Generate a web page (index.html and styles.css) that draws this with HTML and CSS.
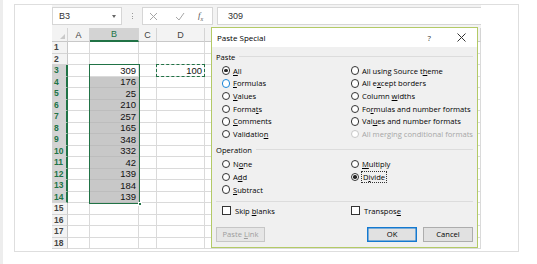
FILE: index.html
```html
<!DOCTYPE html>
<html>
<head>
<meta charset="utf-8">
<link rel="stylesheet" href="styles.css">
</head>
<body>
<div class="strip"></div>
<div class="card">
  <div class="pane">
    <div class="fbar">
      <div class="namebox"><span>B3</span><span class="dd"></span></div>
      <div class="vdots"><i></i><i></i><i></i></div>
      <div class="fxbox">
        <svg class="ico-x" width="9" height="9" viewBox="0 0 9 9"><path d="M1 1L8 8M8 1L1 8" stroke="#a6a6a6" stroke-width="1" fill="none"/></svg>
        <svg class="ico-ok" width="10" height="9" viewBox="0 0 10 9"><path d="M1 5L4 8L9 1" stroke="#a6a6a6" stroke-width="1" fill="none"/></svg>
        <span class="fx">f<sub>x</sub></span>
      </div>
      <div class="input">309</div>
    </div>
    <div class="grid">
      <div class="ch corner"><span class="tri"></span></div><div class="ch">A</div><div class="ch csel">B</div><div class="ch">C</div><div class="ch">D</div><div class="ch"></div>
      <div class="rh">1</div><div class="c"></div><div class="c"></div><div class="c"></div><div class="c"></div><div class="c"></div>
      <div class="rh">2</div><div class="c"></div><div class="c"></div><div class="c"></div><div class="c"></div><div class="c"></div>
      <div class="rh rsel">3</div><div class="c"></div><div class="c n">309</div><div class="c"></div><div class="c n">100</div><div class="c"></div>
      <div class="rh rsel">4</div><div class="c"></div><div class="c n s">176</div><div class="c"></div><div class="c"></div><div class="c"></div>
      <div class="rh rsel">5</div><div class="c"></div><div class="c n s">25</div><div class="c"></div><div class="c"></div><div class="c"></div>
      <div class="rh rsel">6</div><div class="c"></div><div class="c n s">210</div><div class="c"></div><div class="c"></div><div class="c"></div>
      <div class="rh rsel">7</div><div class="c"></div><div class="c n s">257</div><div class="c"></div><div class="c"></div><div class="c"></div>
      <div class="rh rsel">8</div><div class="c"></div><div class="c n s">165</div><div class="c"></div><div class="c"></div><div class="c"></div>
      <div class="rh rsel">9</div><div class="c"></div><div class="c n s">348</div><div class="c"></div><div class="c"></div><div class="c"></div>
      <div class="rh rsel">10</div><div class="c"></div><div class="c n s">332</div><div class="c"></div><div class="c"></div><div class="c"></div>
      <div class="rh rsel">11</div><div class="c"></div><div class="c n s">42</div><div class="c"></div><div class="c"></div><div class="c"></div>
      <div class="rh rsel">12</div><div class="c"></div><div class="c n s">139</div><div class="c"></div><div class="c"></div><div class="c"></div>
      <div class="rh rsel">13</div><div class="c"></div><div class="c n s">184</div><div class="c"></div><div class="c"></div><div class="c"></div>
      <div class="rh rsel">14</div><div class="c"></div><div class="c n s">139</div><div class="c"></div><div class="c"></div><div class="c"></div>
      <div class="rh">15</div><div class="c"></div><div class="c"></div><div class="c"></div><div class="c"></div><div class="c"></div>
      <div class="rh">16</div><div class="c"></div><div class="c"></div><div class="c"></div><div class="c"></div><div class="c"></div>
      <div class="rh">17</div><div class="c"></div><div class="c"></div><div class="c"></div><div class="c"></div><div class="c"></div>
      <div class="rh">18</div><div class="c"></div><div class="c"></div><div class="c"></div><div class="c"></div><div class="c"></div>
      <div class="selbox"><span class="handle"></span></div>
      <div class="marquee"></div>
    </div>

    <div class="dialog">
      <div class="titlebar">
        <span class="title">Paste Special</span>
        <span class="help">?</span>
        <svg class="close" width="9" height="9" viewBox="0 0 9 9"><path d="M0.5 0.5L8.5 8.5M8.5 0.5L0.5 8.5" stroke="#333" stroke-width="1" fill="none"/></svg>
      </div>
      <div class="body">
        <div class="glabel"><span>Paste</span><i class="gline"></i></div>
        <div class="opts">
          <div class="opt"><span class="radio on"></span><span><u>A</u>ll</span></div>
          <div class="opt"><span class="radio"></span><span>All using Source t<u>h</u>eme</span></div>
          <div class="opt"><span class="radio hover"></span><span><u>F</u>ormulas</span></div>
          <div class="opt"><span class="radio"></span><span>All e<u>x</u>cept borders</span></div>
          <div class="opt"><span class="radio"></span><span><u>V</u>alues</span></div>
          <div class="opt"><span class="radio"></span><span>Column <u>w</u>idths</span></div>
          <div class="opt"><span class="radio"></span><span>Forma<u>t</u>s</span></div>
          <div class="opt"><span class="radio"></span><span>Fo<u>r</u>mulas and number formats</span></div>
          <div class="opt"><span class="radio"></span><span><u>C</u>omments</span></div>
          <div class="opt"><span class="radio"></span><span>Val<u>u</u>es and number formats</span></div>
          <div class="opt"><span class="radio"></span><span>Validatio<u>n</u></span></div>
          <div class="opt dis"><span class="radio"></span><span>All merging conditional formats</span></div>
        </div>
        <div class="glabel op"><span>Operation</span><i class="gline"></i></div>
        <div class="opts ops">
          <div class="opt"><span class="radio"></span><span>N<u>o</u>ne</span></div>
          <div class="opt"><span class="radio"></span><span><u>M</u>ultiply</span></div>
          <div class="opt"><span class="radio"></span><span>A<u>d</u>d</span></div>
          <div class="opt"><span class="radio on"></span><span class="focus">D<u>i</u>vide</span></div>
          <div class="opt"><span class="radio"></span><span><u>S</u>ubtract</span></div>
          <div class="opt"></div>
        </div>
        <div class="sep"></div>
        <div class="checks">
          <div class="opt"><span class="box"></span><span>Skip <u>b</u>lanks</span></div>
          <div class="opt"><span class="box"></span><span>Transpos<u>e</u></span></div>
        </div>
        <div class="buttons">
          <div class="btn disabled"><span>Paste <u>L</u>ink</span></div>
          <div class="spacer"></div>
          <div class="btn default"><span>OK</span></div>
          <div class="btn"><span>Cancel</span></div>
        </div>
      </div>
    </div>
  </div>
</div>
</body>
</html>
```
FILE: styles.css
```css
* { box-sizing: border-box; }
html, body { margin: 0; padding: 0; }
body {
  width: 537px;
  height: 264px;
  background: #ffffff;
  display: flex;
  align-items: flex-start;
  overflow: hidden;
  font-family: "Liberation Sans", Arial, sans-serif;
}
.strip {
  width: 3px;
  height: 264px;
  background: #ededed;
  flex: none;
}
.card {
  margin-left: 11px;
  margin-top: 4px;
  width: 505px;
  height: 248px;
  border: 1px solid #dedede;
  flex: none;
}
.pane {
  position: relative;
  margin-left: 37px;
  width: 429px;
  height: 244px;
}

/* formula bar */
.fbar {
  height: 23px;
  background: #f3f3f3;
  display: flex;
  align-items: flex-start;
  padding-top: 2px;
}
.namebox {
  width: 70px;
  height: 18px;
  background: #fff;
  border: 1px solid #d6d6d6;
  display: flex;
  align-items: center;
  padding-left: 6px;
  font-size: 9px;
  color: #333;
}
.namebox .dd {
  margin-left: auto;
  margin-right: 5px;
  width: 0;
  height: 0;
  border-left: 2.5px solid transparent;
  border-right: 2.5px solid transparent;
  border-top: 3px solid #666;
}
.vdots {
  width: 20px;
  height: 18px;
  display: flex;
  flex-direction: column;
  align-items: center;
  justify-content: center;
  gap: 1.5px;
}
.vdots i {
  display: block;
  width: 1px;
  height: 1px;
  background: #9a9a9a;
}
.fxbox {
  width: 71px;
  height: 18px;
  background: #fff;
  border: 1px solid #d6d6d6;
  display: flex;
  align-items: center;
}
.ico-x { margin-left: 6px; }
.ico-ok { margin-left: 17px; }
.fx {
  margin-left: 13px;
  font-family: "Liberation Serif", serif;
  font-style: italic;
  font-size: 9px;
  color: #555;
}
.fx sub { font-size: 6px; }
.input {
  margin-left: 4px;
  flex: 1;
  height: 18px;
  background: #fff;
  border: 1px solid #d6d6d6;
  border-right: none;
  padding-left: 10px;
  font-size: 9px;
  color: #333;
  display: flex;
  align-items: center;
}

/* grid */
.grid {
  position: relative;
  display: grid;
  grid-template-columns: 16px 22px 49px 18px 48px 1fr;
  grid-template-rows: 14px repeat(18, 11.5px);
  font-size: 9.5px;
  color: #111;
}
.ch {
  background: #f3f3f3;
  border-right: 1px solid #d4d4d4;
  border-bottom: 1px solid #c8c8c8;
  display: flex;
  align-items: center;
  justify-content: center;
  color: #444;
  font-size: 9px;
}
.corner { position: relative; }
.corner .tri {
  position: absolute;
  right: 2px;
  bottom: 2px;
  width: 0; height: 0;
  border-left: 5px solid transparent;
  border-bottom: 5px solid #c9c9c9;
}
.csel {
  background: #d3d3d3;
  color: #217346;
  border-bottom: 2px solid #217346;
}
.rh {
  background: #f3f3f3;
  border-right: 1px solid #c8c8c8;
  border-bottom: 1px solid #d4d4d4;
  display: flex;
  align-items: center;
  padding-left: 2px;
  font-size: 8.5px;
  font-weight: bold;
  color: #444;
}
.rsel {
  background: #d3d3d3;
  color: #217346;
  border-right: 2px solid #217346;
}
.c {
  border-right: 1px solid #dadada;
  border-bottom: 1px solid #dadada;
  background: #fff;
}
.n {
  display: flex;
  align-items: center;
  justify-content: flex-end;
  padding-right: 2px;
}
.s { background: #c8c8c8; border-color: #bdbdbd; }
.selbox {
  position: absolute;
  grid-column: 3 / 4;
  grid-row: 4 / 16;
  top: -1px; left: -1px; right: -1px; bottom: -1px;
  border: 1.5px solid #217346;
}
.handle {
  position: absolute;
  right: -3px;
  bottom: -3px;
  width: 4px;
  height: 4px;
  background: #217346;
  border: 0.5px solid #fff;
}
.marquee {
  position: absolute;
  grid-column: 5 / 6;
  grid-row: 4 / 5;
  top: -1px; left: -1px; right: 0; bottom: 0;
  border: 1px dashed #217346;
}

/* dialog */
.dialog {
  position: absolute;
  left: 159px;
  top: 22px;
  width: 267px;
  height: 221px;
  border: 1px solid #b3ca66;
  background: #f0f0f0;
  font-family: "Open Sans", "Noto Sans", sans-serif;
  font-size: 7.6px;
  color: #000;
}
.titlebar {
  height: 19px;
  background: #fff;
  display: flex;
  align-items: center;
  padding-left: 5px;
}
.title { font-size: 8px; color: #000; }
.help { margin-left: auto; font-size: 8px; color: #333; }
.close { margin-left: 26px; margin-right: 11px; }
.body {
  padding: 0 4px 0 4px;
}
.glabel {
  display: flex;
  align-items: center;
  height: 10px;
  margin-top: 4.7px;
}
.glabel .gline {
  flex: 1;
  height: 1px;
  background: #dcdcdc;
  margin-left: 4px;
}
.glabel.op { margin-top: 4.4px; }
.opts {
  display: grid;
  grid-template-columns: 129px 1fr;
  grid-auto-rows: 12.7px;
  margin-top: 2.7px;
  padding-left: 5.5px;
}
.ops { margin-top: 3px; }
.opt {
  display: flex;
  align-items: center;
  gap: 3px;
  white-space: nowrap;
}
.radio {
  width: 8.5px;
  height: 8.5px;
  border-radius: 50%;
  border: 1px solid #333;
  background: #fff;
  flex: none;
  position: relative;
}
.radio.on::after {
  content: "";
  position: absolute;
  left: 1.5px; top: 1.5px;
  width: 3.5px; height: 3.5px;
  border-radius: 50%;
  background: #222;
}
.radio.hover { border-color: #1a86d9; }
.dis { color: #a6a6a6; }
.dis .radio { border-color: #c8c8c8; }
.focus { outline: 1px dotted #333; outline-offset: 0; padding: 0 1px; }
.sep {
  height: 1px;
  background: #dcdcdc;
  margin-top: 4.9px;
}
.checks {
  display: grid;
  grid-template-columns: 129px 1fr;
  height: 12px;
  margin-top: 3px;
  padding-left: 6px;
}
.box {
  width: 9px;
  height: 9px;
  border: 1px solid #333;
  background: #fff;
  flex: none;
  margin-right: 1px;
}
.buttons {
  display: flex;
  margin-top: 10px;
  gap: 6px;
}
.spacer { flex: 1; }
.btn {
  width: 50px;
  height: 15px;
  background: #e1e1e1;
  border: 1px solid #adadad;
  display: flex;
  align-items: center;
  justify-content: center;
  font-size: 7.6px;
}
.btn.disabled {
  width: 49px;
  color: #9c9c9c;
  border-color: #c6c6c6;
  background: #e6e6e6;
}
.btn.default { border: 1px solid #1479d0; box-shadow: inset 0 0 0 0.5px #1479d0; }
```
